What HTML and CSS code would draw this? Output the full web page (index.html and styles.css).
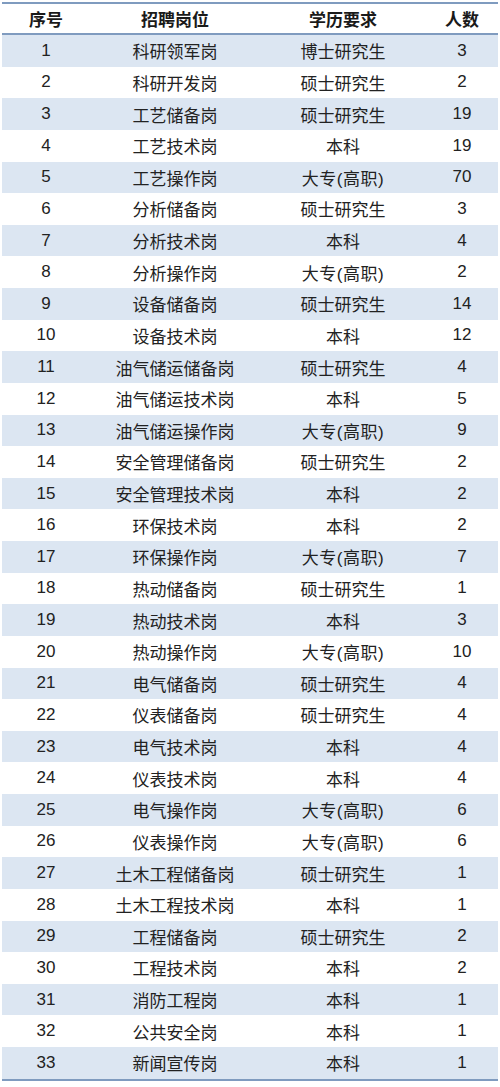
FILE: index.html
```html
<!DOCTYPE html>
<html lang="zh">
<head>
<meta charset="utf-8">
<link rel="stylesheet" href="styles.css">
</head>
<body>
<table class="jobs">
<colgroup><col class="c1"><col class="c2"><col class="c3"><col class="c4"></colgroup>
<thead>
<tr><th>序号</th><th>招聘岗位</th><th>学历要求</th><th>人数</th></tr>
</thead>
<tbody>
<tr><td>1</td><td>科研领军岗</td><td>博士研究生</td><td>3</td></tr>
<tr><td>2</td><td>科研开发岗</td><td>硕士研究生</td><td>2</td></tr>
<tr><td>3</td><td>工艺储备岗</td><td>硕士研究生</td><td>19</td></tr>
<tr><td>4</td><td>工艺技术岗</td><td>本科</td><td>19</td></tr>
<tr><td>5</td><td>工艺操作岗</td><td class="edu">大专(高职)</td><td>70</td></tr>
<tr><td>6</td><td>分析储备岗</td><td>硕士研究生</td><td>3</td></tr>
<tr><td>7</td><td>分析技术岗</td><td>本科</td><td>4</td></tr>
<tr><td>8</td><td>分析操作岗</td><td class="edu">大专(高职)</td><td>2</td></tr>
<tr><td>9</td><td>设备储备岗</td><td>硕士研究生</td><td>14</td></tr>
<tr><td>10</td><td>设备技术岗</td><td>本科</td><td>12</td></tr>
<tr><td>11</td><td>油气储运储备岗</td><td>硕士研究生</td><td>4</td></tr>
<tr><td>12</td><td>油气储运技术岗</td><td>本科</td><td>5</td></tr>
<tr><td>13</td><td>油气储运操作岗</td><td class="edu">大专(高职)</td><td>9</td></tr>
<tr><td>14</td><td>安全管理储备岗</td><td>硕士研究生</td><td>2</td></tr>
<tr><td>15</td><td>安全管理技术岗</td><td>本科</td><td>2</td></tr>
<tr><td>16</td><td>环保技术岗</td><td>本科</td><td>2</td></tr>
<tr><td>17</td><td>环保操作岗</td><td class="edu">大专(高职)</td><td>7</td></tr>
<tr><td>18</td><td>热动储备岗</td><td>硕士研究生</td><td>1</td></tr>
<tr><td>19</td><td>热动技术岗</td><td>本科</td><td>3</td></tr>
<tr><td>20</td><td>热动操作岗</td><td class="edu">大专(高职)</td><td>10</td></tr>
<tr><td>21</td><td>电气储备岗</td><td>硕士研究生</td><td>4</td></tr>
<tr><td>22</td><td>仪表储备岗</td><td>硕士研究生</td><td>4</td></tr>
<tr><td>23</td><td>电气技术岗</td><td>本科</td><td>4</td></tr>
<tr><td>24</td><td>仪表技术岗</td><td>本科</td><td>4</td></tr>
<tr><td>25</td><td>电气操作岗</td><td class="edu">大专(高职)</td><td>6</td></tr>
<tr><td>26</td><td>仪表操作岗</td><td class="edu">大专(高职)</td><td>6</td></tr>
<tr><td>27</td><td>土木工程储备岗</td><td>硕士研究生</td><td>1</td></tr>
<tr><td>28</td><td>土木工程技术岗</td><td>本科</td><td>1</td></tr>
<tr><td>29</td><td>工程储备岗</td><td>硕士研究生</td><td>2</td></tr>
<tr><td>30</td><td>工程技术岗</td><td>本科</td><td>2</td></tr>
<tr><td>31</td><td>消防工程岗</td><td>本科</td><td>1</td></tr>
<tr><td>32</td><td>公共安全岗</td><td>本科</td><td>1</td></tr>
<tr><td>33</td><td>新闻宣传岗</td><td>本科</td><td>1</td></tr>
</tbody>
</table>
</body>
</html>
```
FILE: styles.css
```css
html, body {
  margin: 0;
  padding: 0;
  background: #ffffff;
}
body {
  padding: 2px 2px 0 2px;
  font-family: "Liberation Sans", "Noto Sans CJK SC", sans-serif;
  color: #222222;
}
.jobs {
  width: 496px;
  border-collapse: collapse;
  table-layout: fixed;
  border-top: 2px solid #7f9bbf;
  border-bottom: 2px solid #7f9bbf;
}
.c1 { width: 88px; }
.c2 { width: 170px; }
.c3 { width: 166px; }
.c4 { width: 72px; }
.jobs th {
  height: 29px;
  padding: 0;
  font-size: 17px;
  font-weight: bold;
  text-align: center;
  border-bottom: 2px solid #7f9bbf;
  color: #1a1a1a;
}
.jobs td {
  height: 31.64px;
  padding: 0;
  font-size: 17px;
  text-align: center;
  vertical-align: middle;
}
.jobs td.edu {
  letter-spacing: 0.5px;
}
.jobs tbody tr:nth-child(odd) td {
  background: #dce6f2;
}
```
